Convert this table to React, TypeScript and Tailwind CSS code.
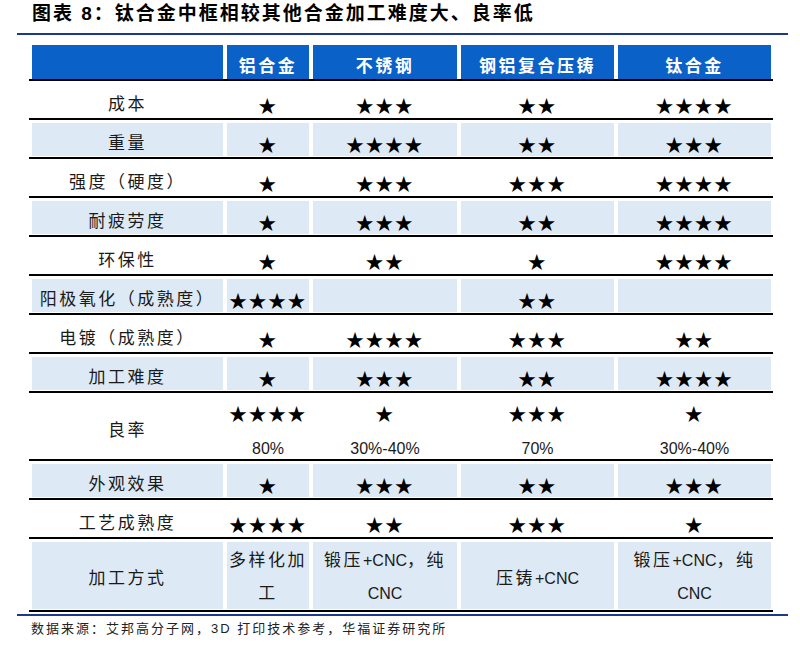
const CJK = "font-['Liberation_Sans','Noto_Sans_CJK_SC',sans-serif]";
const STAR = "font-['Noto_Sans_CJK_SC',sans-serif]";

type Row = { label: string; values: string[]; shade: boolean };

const rows: Row[] = [
  { label: '成本', values: ['★', '★★★', '★★', '★★★★'], shade: false },
  { label: '重量', values: ['★', '★★★★', '★★', '★★★'], shade: true },
  { label: '强度（硬度）', values: ['★', '★★★', '★★★', '★★★★'], shade: false },
  { label: '耐疲劳度', values: ['★', '★★★', '★★', '★★★★'], shade: true },
  { label: '环保性', values: ['★', '★★', '★', '★★★★'], shade: false },
  { label: '阳极氧化（成熟度）', values: ['★★★★', '', '★★', ''], shade: true },
  { label: '电镀（成熟度）', values: ['★', '★★★★', '★★★', '★★'], shade: false },
  { label: '加工难度', values: ['★', '★★★', '★★', '★★★★'], shade: true },
];

const tail: Row[] = [
  { label: '外观效果', values: ['★', '★★★', '★★', '★★★'], shade: true },
  { label: '工艺成熟度', values: ['★★★★', '★★', '★★★', '★'], shade: false },
];

const yieldStars = ['★★★★', '★', '★★★', '★'];
const yieldPct = ['80%', '30%-40%', '70%', '30%-40%'];

const headers = ['铝合金', '不锈钢', '钢铝复合压铸', '钛合金'];

const grid = 'grid grid-cols-[191px_82px_144px_153px_153px] gap-x-[4px] px-[3px]';

function Stars({ s }: { s: string }) {
  return <span className={`${STAR} text-[18px] tracking-[1.5px] text-black`}>{s}</span>;
}

function StarRow({ row }: { row: Row }) {
  const bg = row.shade ? 'bg-[#dde9f5]' : '';
  return (
    <div className={`${grid} border-b-2 border-black pt-[3px] pb-[1px]`}>
      <div className={`${bg} h-[33px] pt-[9px] leading-[24px] text-center text-[17px] tracking-[2.5px] text-[#1a1a1a]`}>
        {row.label}
      </div>
      {row.values.map((v, i) => (
        <div key={i} className={`${bg} h-[33px] pt-[9px] leading-[24px] text-center`}>
          <Stars s={v} />
        </div>
      ))}
    </div>
  );
}

function Forge() {
  return (
    <>
      <div className="leading-[33px]">
        <span className="tracking-[2.5px]">锻压</span>
        <span className="text-[16px]">+CNC</span>
        <span className="tracking-[2.5px]">，纯</span>
      </div>
      <div className="leading-[33px] text-[16px]">CNC</div>
    </>
  );
}

const methodCell =
  'bg-[#dde9f5] h-[67px] flex flex-col justify-center pt-[3px] text-center text-[17px] text-[#1a1a1a]';

export default function App() {
  return (
    <div className={`${CJK} w-[800px] h-[664px] bg-white overflow-hidden`}>
      <div className="pl-[32px] pt-[3px] h-[33px] text-[19px] leading-[22px] font-bold tracking-[2px] text-black">
        图表 8：钛合金中框相较其他合金加工难度大、良率低
      </div>
      <div className="ml-[17px] w-[771px] h-[2px] bg-[#1b3a8e]" />

      <div className="ml-[29px] w-[744px] mt-[10px]">
        {/* header */}
        <div className={`${grid} border-b-2 border-black`}>
          <div className="bg-[#0a62c9] h-[34px]" />
          {headers.map((h) => (
            <div
              key={h}
              className="bg-[#0a62c9] h-[34px] pt-[12px] leading-[20px] text-center text-white font-bold text-[17px] tracking-[2.5px]"
            >
              {h}
            </div>
          ))}
        </div>

        {rows.map((r) => (
          <StarRow key={r.label} row={r} />
        ))}

        {/* yield */}
        <div className={`${grid} border-b-2 border-black pt-[3px] pb-[1px]`}>
          <div className="h-[62px] flex items-center justify-center pt-[8px] text-[17px] tracking-[2.5px] text-[#1a1a1a]">
            良率
          </div>
          {yieldStars.map((s, i) => (
            <div key={i} className="h-[62px] pt-[6px] text-center">
              <div className="leading-[22px]">
                <Stars s={s} />
              </div>
              <div className="mt-[11px] leading-[22px] text-[16px] text-[#1a1a1a]">{yieldPct[i]}</div>
            </div>
          ))}
        </div>

        {tail.map((r) => (
          <StarRow key={r.label} row={r} />
        ))}

        {/* method */}
        <div className={`${grid} border-b-2 border-black pt-[3px] pb-[1px]`}>
          <div className="bg-[#dde9f5] h-[67px] flex items-center justify-center pt-[6px] text-[17px] tracking-[2.5px] text-[#1a1a1a]">
            加工方式
          </div>
          <div className={`${methodCell} tracking-[2.5px]`}>
            <div className="leading-[33px]">多样化加</div>
            <div className="leading-[33px]">工</div>
          </div>
          <div className={methodCell}>
            <Forge />
          </div>
          <div className={`${methodCell} pt-[6px]`}>
            <div className="leading-[33px]">
              <span className="tracking-[2.5px]">压铸</span>
              <span className="text-[16px]">+CNC</span>
            </div>
          </div>
          <div className={methodCell}>
            <Forge />
          </div>
        </div>
      </div>

      <div className="ml-[17px] w-[771px] h-[2px] mt-[2px] bg-[#1b3a8e]" />
      <div className="pl-[31px] pt-[4px] text-[13px] leading-[18px] tracking-[2px] text-[#222]">
        数据来源：艾邦高分子网，3D 打印技术参考，华福证券研究所
      </div>
    </div>
  );
}
